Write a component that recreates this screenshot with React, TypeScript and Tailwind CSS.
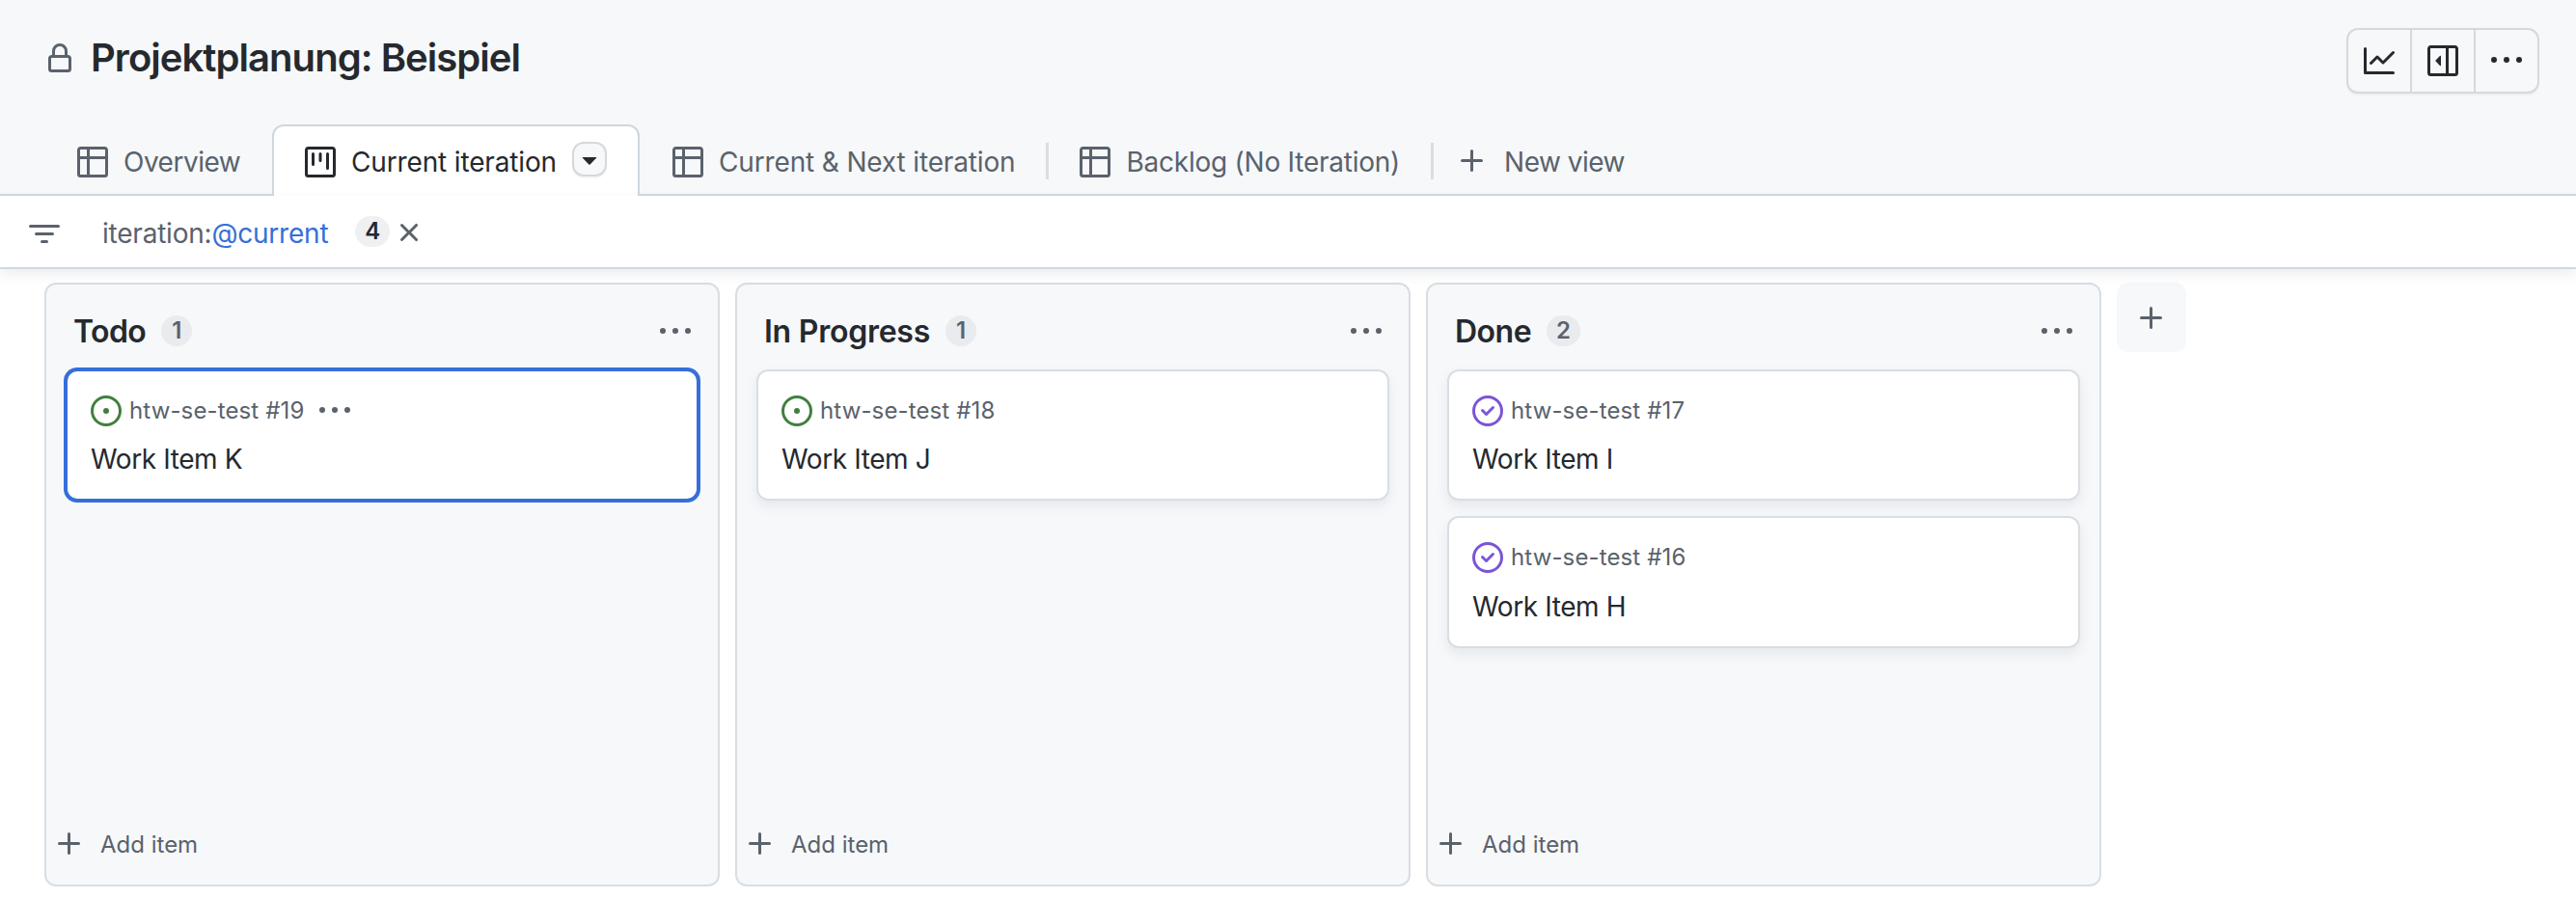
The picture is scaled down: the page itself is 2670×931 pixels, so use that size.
import React from "react";

const paths = {
  lock: "M4 4a4 4 0 0 1 8 0v2h.25c.966 0 1.75.784 1.75 1.75v5.5A1.75 1.75 0 0 1 12.25 15h-8.5A1.75 1.75 0 0 1 2 13.25v-5.5C2 6.784 2.784 6 3.75 6H4Zm8.25 3.5h-8.5a.25.25 0 0 0-.25.25v5.5c0 .138.112.25.25.25h8.5a.25.25 0 0 0 .25-.25v-5.5a.25.25 0 0 0-.25-.25ZM10.5 6V4a2.5 2.5 0 1 0-5 0v2Z",
  table: "M0 1.75C0 .784.784 0 1.75 0h12.5C15.216 0 16 .784 16 1.75v12.5A1.75 1.75 0 0 1 14.25 16H1.75A1.75 1.75 0 0 1 0 14.25ZM6.5 6.5v8h7.75a.25.25 0 0 0 .25-.25V6.5Zm8-1.5V1.75a.25.25 0 0 0-.25-.25H6.5V5Zm-13 1.5v7.75c0 .138.112.25.25.25H5v-8ZM5 5V1.5H1.75a.25.25 0 0 0-.25.25V5Z",
  project: "M1.75 0h12.5C15.216 0 16 .784 16 1.75v12.5A1.75 1.75 0 0 1 14.25 16H1.75A1.75 1.75 0 0 1 0 14.25V1.75C0 .784.784 0 1.75 0ZM1.5 1.75v12.5c0 .138.112.25.25.25h12.5a.25.25 0 0 0 .25-.25V1.75a.25.25 0 0 0-.25-.25H1.75a.25.25 0 0 0-.25.25ZM11.75 3a.75.75 0 0 1 .75.75v7.5a.75.75 0 0 1-1.5 0v-7.5a.75.75 0 0 1 .75-.75Zm-8.25.75a.75.75 0 0 1 1.5 0v5.5a.75.75 0 0 1-1.5 0ZM8 3a.75.75 0 0 1 .75.75v3.5a.75.75 0 0 1-1.5 0v-3.5A.75.75 0 0 1 8 3Z",
  filter: "M.75 3h14.5a.75.75 0 0 1 0 1.5H.75a.75.75 0 0 1 0-1.5ZM3 7.75A.75.75 0 0 1 3.75 7h8.5a.75.75 0 0 1 0 1.5h-8.5A.75.75 0 0 1 3 7.75Zm3 4a.75.75 0 0 1 .75-.75h2.5a.75.75 0 0 1 0 1.5h-2.5a.75.75 0 0 1-.75-.75Z",
  graph: "M1.5 1.75V13.5h13.75a.75.75 0 0 1 0 1.5H.75a.75.75 0 0 1-.75-.75V1.75a.75.75 0 0 1 1.5 0Zm14.28 2.53-5.25 5.25a.75.75 0 0 1-1.06 0L7 7.06 4.28 9.78a.751.751 0 0 1-1.042-.018.751.751 0 0 1-.018-1.042l3.25-3.25a.75.75 0 0 1 1.06 0L10 7.94l4.72-4.72a.751.751 0 0 1 1.042.018.751.751 0 0 1 .018 1.042Z",
  sidebar: "m4.177 7.823 2.396-2.396A.25.25 0 0 1 7 5.604v4.792a.25.25 0 0 1-.427.177L4.177 8.177a.25.25 0 0 1 0-.354Z M0 1.75C0 .784.784 0 1.75 0h12.5C15.216 0 16 .784 16 1.75v12.5A1.75 1.75 0 0 1 14.25 16H1.75A1.75 1.75 0 0 1 0 14.25Zm1.75-.25a.25.25 0 0 0-.25.25v12.5c0 .138.112.25.25.25H9.5v-13Zm12.5 13a.25.25 0 0 0 .25-.25V1.75a.25.25 0 0 0-.25-.25H11v13Z",
  kebab: "M8 9a1.5 1.5 0 1 0 0-3 1.5 1.5 0 0 0 0 3ZM1.5 9a1.5 1.5 0 1 0 0-3 1.5 1.5 0 0 0 0 3Zm13 0a1.5 1.5 0 1 0 0-3 1.5 1.5 0 0 0 0 3Z",
  plus: "M7.75 2a.75.75 0 0 1 .75.75V7h4.25a.75.75 0 0 1 0 1.5H8.5v4.25a.75.75 0 0 1-1.5 0V8.5H2.75a.75.75 0 0 1 0-1.5H7V2.75A.75.75 0 0 1 7.75 2Z",
  x: "M3.72 3.72a.75.75 0 0 1 1.06 0L8 6.94l3.22-3.22a.75.75 0 1 1 1.06 1.06L9.06 8l3.22 3.22a.75.75 0 1 1-1.06 1.06L8 9.06l-3.22 3.22a.75.75 0 0 1-1.06-1.06L6.94 8 3.72 4.78a.75.75 0 0 1 0-1.06Z",
  triangle: "m4.427 7.427 3.396 3.396a.25.25 0 0 0 .354 0l3.396-3.396A.25.25 0 0 0 11.396 7H4.604a.25.25 0 0 0-.177.427Z",
  open: "M8 9.5a1.5 1.5 0 1 0 0-3 1.5 1.5 0 0 0 0 3Z M8 0a8 8 0 1 1 0 16A8 8 0 0 1 8 0ZM1.5 8a6.5 6.5 0 1 0 13 0 6.5 6.5 0 0 0-13 0Z",
  closed: "M11.28 6.78a.75.75 0 0 0-1.06-1.06L7.25 8.69 5.78 7.22a.75.75 0 0 0-1.06 1.06l2 2a.75.75 0 0 0 1.06 0l3.5-3.5Z M16 8A8 8 0 1 1 0 8a8 8 0 0 1 16 0Zm-1.5 0a6.5 6.5 0 1 0-13 0 6.5 6.5 0 0 0 13 0Z",
};

function Icon({ name, className = "" }: { name: keyof typeof paths; className?: string }) {
  return (
    <svg viewBox="0 0 16 16" className={`size-8 shrink-0 fill-current ${className}`} aria-hidden="true">
      <path fillRule="evenodd" d={paths[name]} />
    </svg>
  );
}

type Item = { id: number; title: string; state: "open" | "closed"; selected?: boolean };

const columns: { name: string; tracking: string; items: Item[] }[] = [
  { name: "Todo", tracking: "tracking-[-0.6px]", items: [{ id: 19, title: "Work Item K", state: "open", selected: true }] },
  { name: "In Progress", tracking: "tracking-[-0.25px]", items: [{ id: 18, title: "Work Item J", state: "open" }] },
  {
    name: "Done",
    tracking: "tracking-[-0.5px]",
    items: [
      { id: 17, title: "Work Item I", state: "closed" },
      { id: 16, title: "Work Item H", state: "closed" },
    ],
  },
];

function Card({ item }: { item: Item }) {
  return (
    <article
      className={
        item.selected
          ? "h-[136px] rounded-xl border-2 border-[#366fd8] bg-white px-6 pt-[25px] ring-2 ring-[#366fd8]"
          : "group h-[136px] rounded-xl border-2 border-[#d9dee3] bg-white px-6 pt-[25px] shadow-[0_6px_12px_rgba(140,149,159,0.15)] not-first:h-[137px]"
      }
    >
      <div className="flex h-8 items-center text-[24px] leading-8 tracking-[0.13px] text-[#5a626c]">
        <Icon name={item.state} className={item.state === "open" ? "text-[#417f3f]" : "text-[#7a55d8]"} />
        <span className="ml-2 whitespace-nowrap">htw-se-test #{item.id}</span>
        {item.selected && <Icon name="kebab" className="ml-4" />}
      </div>
      <h3 className="mt-[14px] text-[28px] leading-10 tracking-[-0.4px] text-[#25292e] group-not-first:mt-[15px]">{item.title}</h3>
    </article>
  );
}

function Column({ name, tracking, items }: (typeof columns)[number]) {
  return (
    <section className="flex h-[626px] w-[700px] shrink-0 flex-col rounded-xl border-2 border-[#d9dee3] bg-[#f6f8fa]">
      <header className="flex h-[88px] items-center pt-2 pr-7 pl-7">
        <h2 className={`pt-0.5 text-[32px] leading-10 font-semibold whitespace-nowrap text-[#25292e] ${tracking}`}>{name}</h2>
        <span className="ml-4 flex h-8 min-w-8 items-center justify-center rounded-full bg-[#e9ebee] px-2.5 text-[24px] leading-8 font-semibold tracking-[-0.3px] text-[#5a626c]">
          {items.length}
        </span>
        <Icon name="kebab" className="mt-0.5 ml-auto text-[#5a626c]" />
      </header>
      <div className="flex flex-1 flex-col gap-4 px-5">
        {items.map((item) => (
          <Card key={item.id} item={item} />
        ))}
      </div>
      <button className="flex h-[84px] items-center pl-2 text-[24px] text-[#5a626c]">
        <Icon name="plus" />
        <span className="ml-4 pt-px">Add item</span>
      </button>
    </section>
  );
}

export default function App() {
  return (
    <div className="flex h-[931px] w-[2670px] flex-col overflow-hidden bg-white font-['Inter','Liberation_Sans',sans-serif] text-[28px] text-[#5a626c]">
      <header className="flex h-[129px] shrink-0 items-start justify-between bg-[#f6f8fa] pt-[29px] pr-[38px] pl-[46px]">
        <div className="flex items-center pt-[7px]">
          <Icon name="lock" className="mt-0.5" />
          <h1 className="ml-4 text-[40px] leading-[48px] font-semibold tracking-[-0.95px] whitespace-nowrap text-[#25292e]">
            Projektplanung: Beispiel
          </h1>
        </div>
        <div className="flex h-[68px] w-[200px] divide-x-2 divide-[#d6d8da] rounded-xl border-2 border-[#d6d8da] text-[#25292e] shadow-[0_2px_0_rgba(27,31,36,0.04)]">
          <button className="flex w-[66px] items-center justify-center"><Icon name="graph" /></button>
          <button className="flex w-[66px] items-center justify-center"><Icon name="sidebar" /></button>
          <button className="flex w-16 items-center justify-center"><Icon name="kebab" /></button>
        </div>
      </header>

      <nav className="flex h-[74px] shrink-0 bg-[#f6f8fa] whitespace-nowrap">
        <div className="flex w-[282px] items-center border-b-2 border-[#d0d7de] pt-1.5 pl-20">
          <Icon name="table" />
          <span className="ml-4 tracking-[-0.5px]">Overview</span>
        </div>
        <div className="flex w-[381px] items-center rounded-t-xl border-2 border-b-0 border-[#d0d7de] bg-white pt-0.5 pl-8 text-[#25292e]">
          <Icon name="project" />
          <span className="ml-4 tracking-[-0.15px]">Current iteration</span>
          <button className="mb-1.5 ml-4 flex size-9 items-center justify-center rounded-xl border-2 border-[#d6d8da] bg-[#f6f8fa] shadow-[0_2px_0_rgba(27,31,36,0.04)]">
            <Icon name="triangle" />
          </button>
        </div>
        <div className="flex flex-1 items-center border-b-2 border-[#d0d7de] pt-1.5 pl-[34px]">
          <Icon name="table" />
          <span className="ml-4 tracking-[-0.15px]">Current &amp; Next iteration</span>
          <i className="mb-0.5 ml-8 h-[38px] w-[3px] bg-[#d9dee3]" />
          <Icon name="table" className="ml-8" />
          <span className="ml-4 tracking-[-0.24px]">Backlog (No Iteration)</span>
          <i className="mb-0.5 ml-8 h-[38px] w-[3px] bg-[#d9dee3]" />
          <Icon name="plus" className="mb-0.5 ml-6" />
          <span className="ml-[17px] tracking-[-0.5px]">New view</span>
        </div>
      </nav>

      <div className="z-10 flex h-[76px] shrink-0 items-center border-b-2 border-[#d0d7de] bg-white pl-[30px] shadow-[0_6px_12px_rgba(140,149,159,0.15)]">
        <Icon name="filter" className="mt-1.5" />
        <span className="mt-1 ml-11 tracking-[-0.22px]">
          iteration:<span className="text-[#366fd8]">@current</span>
        </span>
        <span className="ml-7 flex h-8 w-9 items-center justify-center rounded-full bg-[#eff0f2] text-[24px] font-semibold text-[#25292e]">4</span>
        <Icon name="x" className="mt-0.5 ml-1" />
      </div>

      <main className="flex flex-1 items-start gap-4 bg-white pt-[14px] pl-[46px]">
        {columns.map((column) => (
          <Column key={column.name} {...column} />
        ))}
        <button className="flex size-[72px] items-center justify-center rounded-xl bg-[#f6f8fa] pt-0.5 text-[#5a626c]">
          <Icon name="plus" />
        </button>
      </main>
    </div>
  );
}
